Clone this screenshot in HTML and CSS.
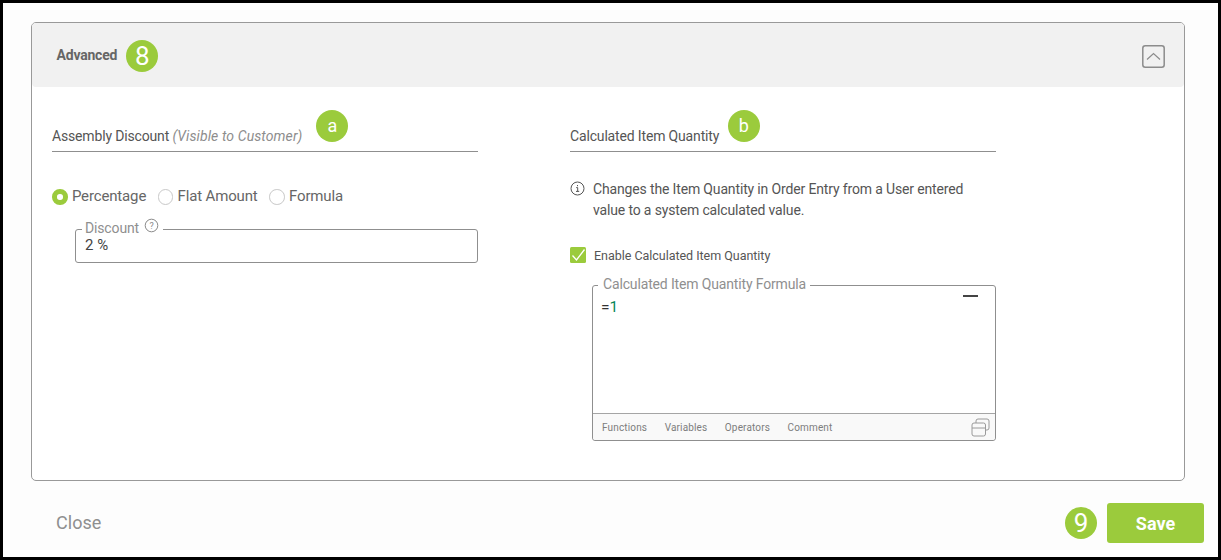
FILE: index.html
```
<!DOCTYPE html>
<html lang="en">
<head>
<meta charset="utf-8">
<title>Advanced</title>
<link rel="stylesheet" href="styles.css">
</head>
<body>
<div class="frame">
  <section class="panel">
    <header class="panel-head">
      <span class="panel-title">Advanced</span>
      <span class="badge badge-head">8</span>
      <button class="collapse" aria-label="Collapse">
        <svg width="23" height="23" viewBox="0 0 23 23"><rect x="0.8" y="0.8" width="21.400" height="21.400" rx="2.500" fill="none" stroke="#8c8c8c" stroke-width="1.500"/><path d="M5 14.500 11.500 8.500l6.500 6" fill="none" stroke="#8c8c8c" stroke-width="1.200"/></svg>
      </button>
    </header>
    <div class="panel-body">
      <div class="col">
        <div class="col-head">
          <span class="col-title">Assembly Discount <em class="hint">(Visible to Customer)</em></span>
          <span class="badge badge-a">a</span>
        </div>
        <div class="radios">
          <label class="radio"><span class="dot dot-on"></span>Percentage</label>
          <label class="radio"><span class="dot"></span>Flat Amount</label>
          <label class="radio"><span class="dot"></span>Formula</label>
        </div>
        <fieldset class="field">
          <legend class="legend legend-field">Discount
            <svg class="help" width="15" height="15" viewBox="0 0 15 15"><circle cx="7.500" cy="7.500" r="6.300" fill="none" stroke="#8a8a8a"/><text x="7.500" y="10.600" text-anchor="middle" class="help-q">?</text></svg>
          </legend>
          <div class="field-value">2 %</div>
        </fieldset>
      </div>
      <div class="col">
        <div class="col-head">
          <span class="col-title">Calculated Item Quantity</span>
          <span class="badge badge-b">b</span>
        </div>
        <div class="info">
          <svg class="info-icon" width="15" height="15" viewBox="0 0 15 15"><circle cx="7.500" cy="7.500" r="6.500" fill="none" stroke="#555"/><path d="M6.200 6.600h1.500v3.600M6 10.400h3.200M7.500 4v1.200" fill="none" stroke="#555"/></svg>
          <p class="info-text">Changes the Item Quantity in Order Entry from a User entered value to a system calculated value.</p>
        </div>
        <label class="check">
          <svg class="check-box" width="16" height="16" viewBox="0 0 16 16"><rect width="16" height="16" rx="1.500" fill="#9bcb3c"/><path d="M2.500 8.500 6.500 13 14.500 2.500" fill="none" stroke="#fff" stroke-width="1.300"/></svg>
          Enable Calculated Item Quantity
        </label>
        <fieldset class="editor">
          <legend class="legend legend-editor">Calculated Item Quantity Formula</legend>
          <div class="editor-main">
            <code class="code">=<span class="num">1</span></code>
            <span class="minimize"></span>
          </div>
          <div class="editor-foot">
            <span>Functions</span><span>Variables</span><span>Operators</span><span>Comment</span>
            <svg class="copy" width="19" height="19" viewBox="0 0 19 19"><path d="M5 5V3A2 2 0 0 1 7 1h9a2 2 0 0 1 2 2v7a2 2 0 0 1-2 2h-1.500" fill="none" stroke="#9a9a9a"/><rect x="1" y="5" width="13.500" height="13" rx="2" fill="none" stroke="#9a9a9a"/><path d="M1 10h13.500" stroke="#9a9a9a"/></svg>
          </div>
        </fieldset>
      </div>
    </div>
  </section>
  <footer class="actions">
    <span class="close">Close</span>
    <div class="save-wrap">
      <span class="badge">9</span>
      <button class="save">Save</button>
    </div>
  </footer>
</div>
</body>
</html>
```
FILE: styles.css
```
* { box-sizing: border-box; }
html, body { margin: 0; padding: 0; }
body { font-family: Roboto, "Liberation Sans", sans-serif; color: #555; background: #fff; }
.frame {
  width: 1221px;
  height: 560px;
  border: 3px solid #000;
  background: #fdfdfd;
  padding: 19px 33px 0 28px;
  overflow: hidden;
}
.panel {
  height: 459px;
  border: 1px solid #999;
  border-radius: 5px;
  background: #fff;
}
.panel-head {
  height: 64px;
  background: #f1f1f1;
  border-radius: 4px;
  display: flex;
  align-items: center;
  padding: 0 19px 0 24.500px;
}
.panel-title { font-size: 14px; font-weight: 700; color: #666; letter-spacing: -0.2px; margin-right: 9px; }
.badge {
  width: 32px;
  height: 32px;
  border-radius: 50%;
  background: #9bcb3c;
  color: #fff;
  display: inline-flex;
  align-items: center;
  justify-content: center;
  font-size: 26px;
  line-height: 1;
  flex: none;
}
.badge-head { position: relative; top: 1px; }
.badge-a, .badge-b { font-size: 18px; }
.collapse { margin: 2px 0 0 auto; padding: 0; border: 0; background: none; width: 23px; height: 23px; display: block; }
.collapse svg { display: block; }
.panel-body { display: flex; gap: 92px; padding: 0 20px; }
.col { width: 426px; }
.col-head {
  height: 65px;
  border-bottom: 1px solid #8f8f8f;
  display: flex;
  align-items: flex-end;
  padding-bottom: 6px;
}
.col-title { font-size: 14px; color: #555; line-height: 18px; letter-spacing: -0.16px; }
.hint { color: #8d8d8d; letter-spacing: 0.1px; }
.badge-a { margin: 0 0 3px 14px; }
.badge-b { margin: 0 0 3px 8.500px; }
.radios { display: flex; margin-top: 34px; gap: 11.500px; height: 20px; align-items: center; }
.radio { display: flex; align-items: center; gap: 4.300px; font-size: 15px; color: #666; letter-spacing: -0.15px; }
.dot { width: 15.600px; height: 15.600px; margin-top: 2px; border: 1px solid #c8c8c8; border-radius: 50%; background: #fff; flex: none; }
.dot-on { border: 5px solid #9bcb3c; }
.field {
  margin: 15px 0 0 23px;
  padding: 0 9px;
  height: 42px;
  border: 1px solid #8f8f8f;
  border-radius: 3px;
  min-width: 0;
}
.legend { padding: 0 4px 0 2px; font-size: 14px; color: #8f8f8f; line-height: 14px; height: 16px; letter-spacing: -0.15px; }
.legend-field { margin-left: -3px; padding-left: 3px; }
.help { vertical-align: top; margin: -3px 0 0 2px; }
.help-q { font-size: 9px; fill: #8a8a8a; font-family: Roboto, sans-serif; }
.field-value { font-size: 15px; color: #444; line-height: 16px; }
.info { display: flex; gap: 8px; margin-top: 27px; }
.info-icon { flex: none; margin-top: 2px; }
.info-text { margin: 0; font-size: 14px; line-height: 21px; color: #555; width: 390px; letter-spacing: -0.15px; }
.check { display: flex; align-items: center; gap: 8px; font-size: 12.500px; color: #555; margin-top: 25px; height: 18px; letter-spacing: -0.03px; }
.check-box { flex: none; }
.editor {
  margin: 13px 0 0 22px;
  padding: 0;
  height: 164px;
  width: 404px;
  border: 1px solid #8f8f8f;
  border-radius: 3px;
  min-width: 0;
  display: block;
}
.legend-editor { margin-left: 5px; padding: 0 4px 0 5px; }
.editor-main { height: 122px; position: relative; padding: 7px 8px; border-bottom: 1px solid #a5a5a5; margin-top: -1px; }
.code { font-family: Roboto, sans-serif; font-size: 15.500px; line-height: 16px; color: #333; display: block; }
.num { color: #098658; }
.minimize { position: absolute; top: 3px; right: 17px; width: 15px; height: 2px; background: #444; }
.editor-foot {
  height: 26px;
  background: #f9f9f9;
  border-radius: 0 0 3px 3px;
  display: flex;
  align-items: center;
  gap: 17.500px;
  padding: 0 5px 0 9px;
  font-size: 10px;
  color: #7d7d7d;
  letter-spacing: 0.15px;
}
.copy { margin-left: auto; }
.actions { display: flex; align-items: center; justify-content: space-between; height: 40px; margin-top: 22px; padding-left: 25px; }
.close { font-size: 18px; color: #8f8f8f; letter-spacing: 0.05px; padding-bottom: 2px; }
.save-wrap { display: flex; align-items: center; gap: 10px; margin-right: -19px; }
.save {
  width: 97px;
  height: 40px;
  border: 0;
  border-radius: 3px;
  background: #9bcb3c;
  color: #fff;
  font: 700 18px Roboto, sans-serif;
}
```
